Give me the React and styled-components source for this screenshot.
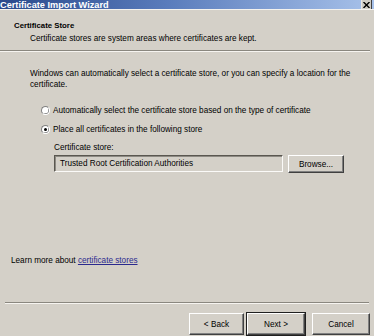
import React from "react";
import styled, { createGlobalStyle } from "styled-components";

const Global = createGlobalStyle`
  html, body { margin: 0; padding: 0; background: #d4d0c8; }
  body { font-family: "Liberation Sans", Tahoma, sans-serif; font-size: 8.2px; color: #000; }
`;

const Window = styled.div`
  width: 374px;
  height: 336px;
  background: #d4d0c8;
  display: flex;
  flex-direction: column;
  overflow: hidden;
`;

const TitleBar = styled.div`
  height: 9px;
  flex: none;
  background: linear-gradient(to right, #2a4a8c, #5a7cbc 45%, #a8c2ea);
  display: flex;
  align-items: flex-end;
  justify-content: space-between;
  overflow: hidden;
  border-bottom: 1px solid #f4f2ee;
`;

const TitleText = styled.span`
  color: #fff;
  font-weight: bold;
  font-size: 9.2px;
  line-height: 10px;
  margin-bottom: -1px;
  white-space: nowrap;
`;

const CloseBtn = styled.div`
  width: 11px;
  height: 9px;
  margin-right: 2px;
  background: #cfccc4;
  border-left: 1px solid #e8e6e0;
  border-right: 1px solid #404040;
  box-sizing: border-box;
  display: flex;
  align-items: center;
  justify-content: center;
`;

const Header = styled.div`
  flex: none;
  padding: 11px 0 0 14px;
  height: 40px;
  box-sizing: border-box;
`;

const HeaderTitle = styled.div`
  font-weight: bold;
  font-size: 7.8px;
  line-height: 10px;
`;

const HeaderSub = styled.div`
  padding-left: 16px;
  margin-top: 3px;
  line-height: 10px;
`;

const Separator = styled.div`
  flex: none;
  height: 0;
  border-top: 1px solid #8a877f;
  border-bottom: 1px solid #f6f4f0;
  margin: ${(p) => p.$margin || "0"};
`;

const Body = styled.div`
  flex: 1;
  display: flex;
  flex-direction: column;
  padding: 16px 0 0 30px;
`;

const Para = styled.p`
  margin: 0;
  width: 325px;
  line-height: 11px;
`;

const Options = styled.div`
  display: flex;
  flex-direction: column;
  gap: 8px;
  margin: 15px 0 0 11px;
`;

const RadioRow = styled.label`
  display: flex;
  align-items: center;
  gap: 3px;
  line-height: 11px;
`;

const Radio = styled.span`
  width: 9px;
  height: 9px;
  border-radius: 50%;
  box-sizing: border-box;
  background: #fff;
  border: 1px solid;
  border-color: #808080 #fff #fff #808080;
  box-shadow: -0.5px -0.5px 0 #404040 inset;
  display: flex;
  align-items: center;
  justify-content: center;
  &::after {
    content: "";
    width: 3px;
    height: 3px;
    border-radius: 50%;
    background: ${(p) => (p.$checked ? "#000" : "transparent")};
  }
`;

const StoreBlock = styled.div`
  margin: 8px 0 0 24px;
  display: flex;
  flex-direction: column;
  gap: 2px;
`;

const StoreLabel = styled.div`
  line-height: 10px;
`;

const StoreRow = styled.div`
  display: flex;
  align-items: flex-start;
  gap: 5px;
`;

const Field = styled.div`
  width: 229px;
  height: 17px;
  box-sizing: border-box;
  border: 1px solid;
  border-color: #5a5750 #fbfaf8 #fbfaf8 #5a5750;
  box-shadow: inset 1px 1px 0 #8d8a83;
  background: #d4d0c8;
  padding: 0 0 0 5px;
  display: flex;
  align-items: center;
`;

const Button = styled.button`
  font-family: inherit;
  font-size: 8.2px;
  color: #000;
  background: #d4d0c8;
  width: ${(p) => p.$w || 56}px;
  height: ${(p) => p.$h || 18}px;
  box-sizing: border-box;
  padding: 0;
  margin: ${(p) => p.$m || "0"};
  border: 1px solid;
  border-color: #fff #404040 #404040 #fff;
  box-shadow: ${(p) =>
    p.$default
      ? "0 0 0 1px #202020, inset -1px -1px 0 #808080"
      : "inset -1px -1px 0 #808080"};
`;

const Learn = styled.div`
  margin: auto 0 0 11px;
  line-height: 11px;
  padding-bottom: 36px;
`;

const Link = styled.a`
  color: #2b2a8e;
  text-decoration: underline;
`;

const Footer = styled.div`
  flex: none;
  display: flex;
  justify-content: flex-end;
  padding: 9px 4px 0 0;
  height: 32px;
  box-sizing: border-box;
`;

export default function App() {
  return (
    <Window>
      <Global />
      <TitleBar>
        <TitleText>Certificate Import Wizard</TitleText>
        <CloseBtn>
          <svg width="7" height="6" viewBox="0 0 7 6">
            <path d="M0.5 0 L6.5 6 M6.5 0 L0.5 6" stroke="#000" strokeWidth="1.4" />
          </svg>
        </CloseBtn>
      </TitleBar>
      <Header>
        <HeaderTitle>Certificate Store</HeaderTitle>
        <HeaderSub>Certificate stores are system areas where certificates are kept.</HeaderSub>
      </Header>
      <Separator $margin="0 4px 0 0" />
      <Body>
        <Para>
          Windows can automatically select a certificate store, or you can specify a location for the certificate.
        </Para>
        <Options>
          <RadioRow>
            <Radio />
            Automatically select the certificate store based on the type of certificate
          </RadioRow>
          <RadioRow>
            <Radio $checked />
            Place all certificates in the following store
          </RadioRow>
        </Options>
        <StoreBlock>
          <StoreLabel>Certificate store:</StoreLabel>
          <StoreRow>
            <Field>Trusted Root Certification Authorities</Field>
            <Button $w={56} $h={18}>Browse...</Button>
          </StoreRow>
        </StoreBlock>
      </Body>
      <Learn>
        Learn more about <Link>certificate stores</Link>
      </Learn>
      <Separator $margin="0 5px" />
      <Footer>
        <Button $w={55} $h={22}>&lt; Back</Button>
        <Button $w={58} $h={22} $default $m="0 0 0 3px">Next &gt;</Button>
        <Button $w={58} $h={22} $m="0 0 0 7px">Cancel</Button>
      </Footer>
    </Window>
  );
}
